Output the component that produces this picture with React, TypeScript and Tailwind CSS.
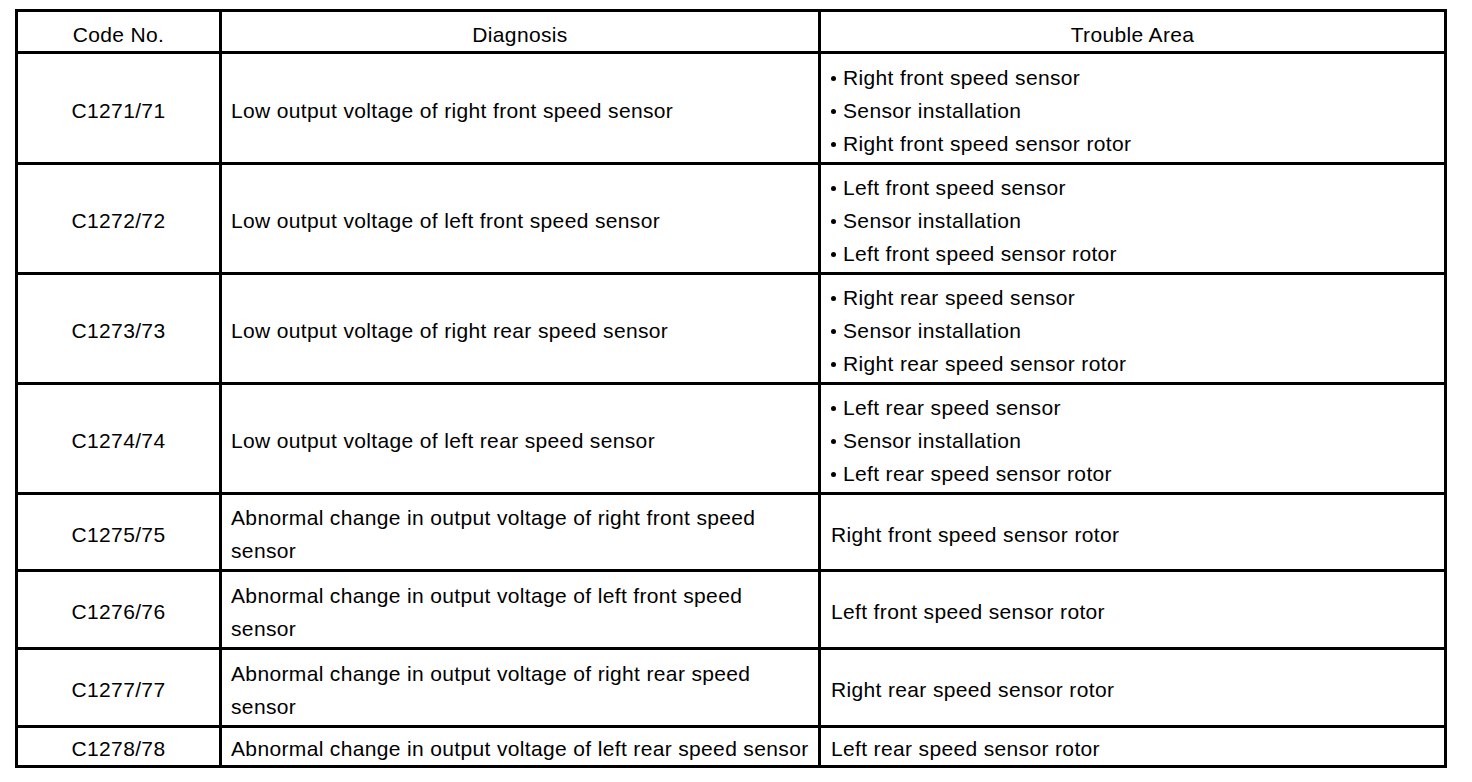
import React from "react";

type Row = { code: string; diag: string; area: string[]; bullets: boolean; h: string };

const rows: Row[] = [
  { code: "C1271/71", diag: "Low output voltage of right front speed sensor", area: ["Right front speed sensor", "Sensor installation", "Right front speed sensor rotor"], bullets: true, h: "h-[111px]" },
  { code: "C1272/72", diag: "Low output voltage of left front speed sensor", area: ["Left front speed sensor", "Sensor installation", "Left front speed sensor rotor"], bullets: true, h: "h-[110px]" },
  { code: "C1273/73", diag: "Low output voltage of right rear speed sensor", area: ["Right rear speed sensor", "Sensor installation", "Right rear speed sensor rotor"], bullets: true, h: "h-[110px]" },
  { code: "C1274/74", diag: "Low output voltage of left rear speed sensor", area: ["Left rear speed sensor", "Sensor installation", "Left rear speed sensor rotor"], bullets: true, h: "h-[110px]" },
  { code: "C1275/75", diag: "Abnormal change in output voltage of right front speed sensor", area: ["Right front speed sensor rotor"], bullets: false, h: "h-[77px]" },
  { code: "C1276/76", diag: "Abnormal change in output voltage of left front speed sensor", area: ["Left front speed sensor rotor"], bullets: false, h: "h-[78px]" },
  { code: "C1277/77", diag: "Abnormal change in output voltage of right rear speed sensor", area: ["Right rear speed sensor rotor"], bullets: false, h: "h-[78px]" },
  { code: "C1278/78", diag: "Abnormal change in output voltage of left rear speed sensor", area: ["Left rear speed sensor rotor"], bullets: false, h: "h-[40px]" },
];

export default function App() {
  return (
    <div className="min-h-screen bg-white pt-[9px] pl-[15px] text-black" style={{ fontFamily: '"Liberation Sans", Arial, sans-serif' }}>
      <div className="w-[1432px] border-[3px] border-black text-[21px] leading-[33px] tracking-[0.35px]">
        <div className="grid h-[39px] grid-cols-[201px_599px_626px]">
          <div className="flex items-center justify-center pt-[5px]">Code No.</div>
          <div className="flex items-center justify-center border-l-[3px] border-black pt-[5px]">Diagnosis</div>
          <div className="flex items-center justify-center border-l-[3px] border-black pt-[5px]">Trouble Area</div>
        </div>
        {rows.map((r) => (
          <div key={r.code} className={`grid grid-cols-[201px_599px_626px] border-t-[3px] border-black ${r.h}`}>
            <div className="flex items-center justify-center pt-[4px]">{r.code}</div>
            <div className="flex items-center border-l-[3px] border-black pl-[9px] pr-[8px] pt-[4px]">
              <span>{r.diag}</span>
            </div>
            <div className="flex flex-col justify-center border-l-[3px] border-black pl-[10px] pt-[4px]">
              {r.area.map((a) => (
                <div key={a} className="flex items-center">
                  {r.bullets && <span className="mr-[7px] mt-[2px] h-[5px] w-[5px] rounded-full bg-black" />}
                  <span>{a}</span>
                </div>
              ))}
            </div>
          </div>
        ))}
      </div>
    </div>
  );
}
